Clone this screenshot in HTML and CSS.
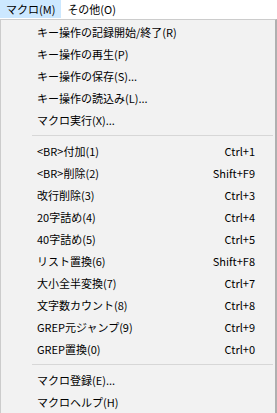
FILE: index.html
```html
<!DOCTYPE html>
<html>
<head>
  <meta charset="UTF-8">
  <title>マクロ</title>
  <link rel="stylesheet" href="styles.css">
</head>
<body>
  <div class="menubar">
    <span class="menubar-item active">マクロ(M)</span>
    <span class="menubar-item">その他(O)</span>
  </div>
  <div class="dropdown">
    <div class="item"><span>キー操作の記録開始/終了(R)</span></div>
    <div class="item"><span>キー操作の再生(P)</span></div>
    <div class="item"><span>キー操作の保存(S)...</span></div>
    <div class="item"><span>キー操作の読込み(L)...</span></div>
    <div class="item"><span>マクロ実行(X)...</span></div>
    <div class="separator"></div>
    <div class="item"><span>&lt;BR&gt;付加(1)</span><span class="key">Ctrl+1</span></div>
    <div class="item"><span>&lt;BR&gt;削除(2)</span><span class="key">Shift+F9</span></div>
    <div class="item"><span>改行削除(3)</span><span class="key">Ctrl+3</span></div>
    <div class="item"><span>20字詰め(4)</span><span class="key">Ctrl+4</span></div>
    <div class="item"><span>40字詰め(5)</span><span class="key">Ctrl+5</span></div>
    <div class="item"><span>リスト置換(6)</span><span class="key">Shift+F8</span></div>
    <div class="item"><span>大小全半変換(7)</span><span class="key">Ctrl+7</span></div>
    <div class="item"><span>文字数カウント(8)</span><span class="key">Ctrl+8</span></div>
    <div class="item"><span>GREP元ジャンプ(9)</span><span class="key">Ctrl+9</span></div>
    <div class="item"><span>GREP置換(0)</span><span class="key">Ctrl+0</span></div>
    <div class="separator"></div>
    <div class="item"><span>マクロ登録(E)...</span></div>
    <div class="item"><span>マクロヘルプ(H)</span></div>
  </div>
</body>
</html>
```

FILE: styles.css
```css
body {
  margin: 0;
  font-family: "Noto Sans CJK JP", "Noto Sans", sans-serif;
  font-size: 11px;
  color: #000;
  background-color: #fff;
}

.menubar {
  display: flex;
  height: 19px;
  background-color: #fff;
}

.menubar-item {
  padding: 0 6px;
  line-height: 18px;
  height: 18px;
}

.menubar-item.active {
  background-color: #cce8ff;
}

.dropdown {
  width: 274px;
  border: 1px solid #cccccc;
  border-bottom: none;
  border-right: 2px solid #b0b0b0;
  background-color: #f2f2f2;
  padding-top: 1px;
  padding-bottom: 4px;
  box-shadow: 0 2px 0 #333;
}

.item {
  display: flex;
  justify-content: space-between;
  height: 22px;
  line-height: 22px;
  padding-left: 36px;
  padding-right: 20px;
}

.key {
  text-align: right;
}

.separator {
  height: 1px;
  background-color: #d7d7d7;
  margin: 4px 2px 4px 31px;
}
```
